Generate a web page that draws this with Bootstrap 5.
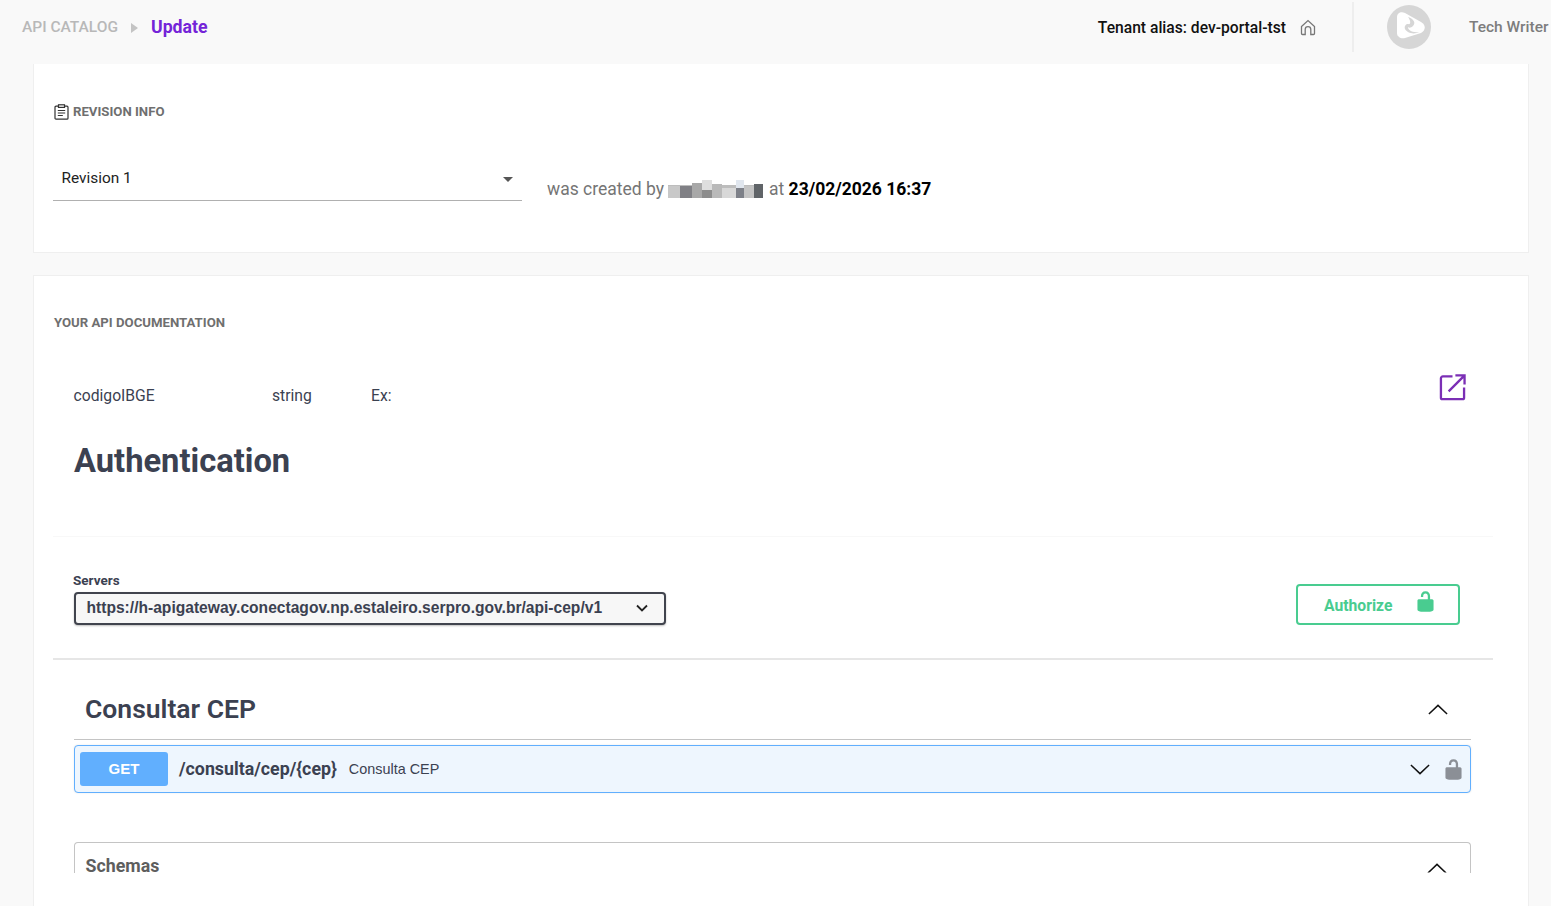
<!DOCTYPE html>
<html lang="en"><head><meta charset="utf-8"><title>Update</title>
<link href="https://cdn.jsdelivr.net/npm/bootstrap@5.3.0/dist/css/bootstrap.min.css" rel="stylesheet">
<style>
html,body{height:906px;overflow:hidden}
body{background:#f9f9f9;font-family:Roboto,sans-serif;color:#000}
.top-bar{height:64px;padding:0 0 10px 22px}
.crumb-root{font-size:15.5px;font-weight:500;color:#b8b8b8;margin-top:2px}
.crumb-sep{width:0;height:0;border-left:7px solid #c4c4c4;border-top:5px solid transparent;border-bottom:5px solid transparent;margin:1px 13px 0 13px}
.crumb-now{font-size:17.7px;font-weight:700;color:#7424d8}
.tenant{font-size:15.65px;font-weight:500;color:#111;margin:2px 14px 0 0}
.vrule{width:2px;height:50px;background:#eeeeee;margin:0 33px 0 36px}
.who{font-size:15.5px;font-weight:500;color:#7d7d7d;margin:2px 0 0 38px;white-space:nowrap;width:82px}
.sheet{margin-left:33px;width:1496px;background:#fff;border:1px solid #efefef}
.sheet-a{height:189px;border-top:0;padding:40px 19px 0 19px}
.sheet-b{margin-top:22px;height:640px;padding:39px 19px 0 19px}
.sec-title{font-size:13.2px;font-weight:700;color:#6f6f6f;line-height:16px;padding-left:1px}
.rev-row{margin-top:38px}
.rev-select{width:469px;height:43px;border-bottom:1px solid #b0b0b0;padding:0 9px 0 8.5px;font-size:15.4px;color:#222}
.caret-down{width:0;height:0;border-top:5px solid #555;border-left:5px solid transparent;border-right:5px solid transparent}
.rev-note{margin-left:25px;margin-top:19px;font-size:17.5px;color:#757575;line-height:24px}
.rev-note b{color:#000;font-weight:700}
.pix{margin:0 6px 0 4px;vertical-align:-3px}
.doc-flow{margin-right:16px}
.param-row{height:108px;padding:53px 26px 0 20.5px;font-size:15.7px;color:#3b4151}
.param-name{width:198.5px}.param-type{width:99px}
.ext-icon{margin-top:-10px;margin-right:1px}
.doc-h1{font-size:32.7px;font-weight:700;color:#3b4151;margin:0 0 0 21px;line-height:40px;height:97px;padding-top:2px}
.pale-rule{border-top:1px solid #f8f8f8;height:38px}
.srv-wrap{padding:0 33px 0 20px;height:84px}
.srv-label{font-size:13.5px;font-weight:700;color:#3b4151;line-height:14px;margin:-1px 0 5px 0}
.srv-select{width:592px;height:33px;margin-left:1px;border:2px solid #41444e;border-radius:4px;background:#f7f7f7;padding:0 16px 1px 10.5px;box-shadow:0 1px 2px rgba(0,0,0,.25);font-family:"Liberation Sans",sans-serif;font-size:15.6px;font-weight:700;color:#3b4151}
.auth-btn{width:164px;height:41px;border:2px solid #49cc90;border-radius:4px;color:#49cc90;background:#fff;font-family:Roboto,sans-serif;font-size:15.7px;font-weight:700;padding:0 21px 0 26px;margin-top:10px}
.auth-btn span{margin-top:2px}
.auth-btn svg{margin-top:-7px}
.srv-rule{border-top:2px solid #e6e6e6}
.tag-head{height:80px;margin:0 22px 0 21px;padding:18px 23px 0 11px;border-bottom:1px solid #c4c4c4;color:#3b4151;font-size:26.5px;font-weight:600}
.tag-chev{margin-top:2px}
.opblk{height:48px;margin:5px 22px 0 21px;border:1px solid #61affe;border-radius:4px;background:#eef6fe;padding:0 5px 0 5px;box-shadow:0 0 2px rgba(0,0,0,.1)}
.get-tag{width:88px;height:34px;background:#61affe;border-radius:3px;color:#fff;font-family:"Liberation Sans",sans-serif;font-size:15px;font-weight:700}
.op-path{font-size:17.8px;font-weight:700;color:#3b4151;margin-left:11px}
.op-sum{font-family:"Liberation Sans",sans-serif;font-size:14.4px;color:#3b4151;margin:2px 0 0 12px}
.lock-gap{margin-left:12px}
.schema-box{margin:49px 22px 0 21px;border:1px solid #c4c4c4;border-bottom:0;border-radius:4px 4px 0 0;height:31px;padding:0 23px 0 10.5px;font-size:17.8px;font-weight:700;color:#5e5e5e}
.schema-head{height:46px;line-height:14px}
.schema-chev{margin-top:4px;clip-path:inset(0 0 1px 0)}
</style></head>
<body>
<header class="top-bar d-flex align-items-center">
  <span class="crumb-root">API CATALOG</span><span class="crumb-sep"></span><span class="crumb-now">Update</span>
  <span class="ms-auto tenant">Tenant alias: dev-portal-tst</span>
  <svg width="16" height="17" viewBox="0 0 16 17" fill="none" stroke="#777" stroke-width="1.3"><path d="M1.5 7.5 8 1.6l6.5 5.9v7a1 1 0 0 1-1 1h-2.7V10.5a2.8 2.8 0 0 0-5.6 0v5H2.5a1 1 0 0 1-1-1z"/></svg>
  <span class="vrule"></span>
  <svg width="44" height="44" viewBox="0 0 44 44"><circle cx="22" cy="22" r="22" fill="#d6d6d6"/><path d="M10 12c0-4 4-6 8-4l16 9c5 3 5 8 0 11l-16 5c-4 1-8-1-8-5z" fill="#fff"/><path d="M21 12c6 2 8 6 5 9-2 2-4 2-5 1 0 3 4 6 11 5-5 3-12 1-14-3-1-3 1-5 3-5 3 1 3-3 0-7z" fill="#d6d6d6"/></svg>
  <span class="who">Tech Writer</span>
</header>
<main>
  <section class="sheet sheet-a">
    <div class="sec-title d-flex align-items-center gap-1">
      <svg width="15" height="16" viewBox="0 0 15 16" fill="none" stroke="#333" stroke-width="1.2"><rect x="1" y="2.2" width="13" height="13" rx="1"/><rect x="4.5" y="0.8" width="6" height="2.6" fill="#fff"/><path d="M3.8 6.5h7.4M3.8 9h7.4M3.8 11.5h5"/></svg>
      <span>REVISION INFO</span>
    </div>
    <div class="rev-row d-flex align-items-start">
      <div class="rev-select d-flex align-items-center justify-content-between"><span>Revision 1</span><span class="caret-down"></span></div>
      <div class="rev-note">was created by<svg class="pix" width="95" height="18" viewBox="0 0 95 18" shape-rendering="crispEdges"><rect y="5" width="95" height="13" fill="#bdbdbd"/><rect x="0" y="6" width="12" height="12" fill="#c8c8c8"/><rect x="12" y="6" width="12" height="12" fill="#808085"/><rect x="24" y="3" width="10" height="15" fill="#a8a8a8"/><rect x="34" y="0" width="10" height="10" fill="#dedede"/><rect x="34" y="10" width="10" height="8" fill="#8d8d8d"/><rect x="44" y="4" width="10" height="14" fill="#b9b9b9"/><rect x="54" y="8" width="14" height="10" fill="#d8d8d8"/><rect x="68" y="0" width="8" height="8" fill="#e0e6ee"/><rect x="68" y="8" width="8" height="10" fill="#7d8088"/><rect x="76" y="6" width="10" height="12" fill="#c4c4c4"/><rect x="86" y="4" width="9" height="14" fill="#606468"/></svg>at <b>23/02/2026 16:37</b></div>
    </div>
  </section>
  <section class="sheet sheet-b">
    <div class="sec-title">YOUR API DOCUMENTATION</div>
    <div class="doc-flow">
      <div class="param-row d-flex align-items-start">
        <span class="param-name">codigoIBGE</span><span class="param-type">string</span><span>Ex:</span>
        <svg class="ext-icon ms-auto" width="27" height="27" viewBox="0 0 28 28" fill="none" stroke="#7b2fb5" stroke-width="2.4"><path d="M14 2.5H4a2 2 0 0 0-2 2v20a1.5 1.5 0 0 0 1.5 1.5h21a1.5 1.5 0 0 0 1.5-1.5V14M10 18 26 2M17 1.5h9.5V11"/></svg>
      </div>
      <h1 class="doc-h1">Authentication</h1>
      <div class="pale-rule"></div>
      <div class="srv-wrap d-flex justify-content-between align-items-start">
        <div>
          <div class="srv-label">Servers</div>
          <div class="srv-select d-flex align-items-center justify-content-between"><span>https://h-apigateway.conectagov.np.estaleiro.serpro.gov.br/api-cep/v1</span>
            <svg width="12" height="8" viewBox="0 0 12 8" fill="none" stroke="#222" stroke-width="1.8"><path d="M1 1.5l5 5 5-5"/></svg></div>
        </div>
        <button type="button" class="auth-btn btn d-flex align-items-center justify-content-between"><span>Authorize</span>
          <svg width="23" height="23" viewBox="0 0 20 20" fill="#49cc90"><path d="M15.8 8H14V5.6C14 2.703 12.665 1 10 1 7.334 1 6 2.703 6 5.6V6h2v-.801C8 3.754 8.797 3 10 3c1.203 0 2 .754 2 2.199V8H4c-.553 0-1 .646-1 1.199V17c0 .549.428 1.139.951 1.307l1.197.387C5.672 18.861 6.55 19 7.1 19h5.8c.549 0 1.428-.139 1.951-.307l1.196-.387c.524-.167.953-.757.953-1.306V9.199C17 8.646 16.352 8 15.8 8z"/></svg></button>
      </div>
      <div class="srv-rule"></div>
      <div class="tag-head d-flex align-items-center justify-content-between"><span>Consultar CEP</span>
        <svg class="tag-chev" width="20" height="11" viewBox="0 0 22 12" preserveAspectRatio="none" fill="none" stroke="#111" stroke-width="1.6"><path d="M1 11 11 1.5 21 11"/></svg></div>
      <div class="opblk d-flex align-items-center">
        <span class="get-tag d-flex align-items-center justify-content-center">GET</span>
        <span class="op-path">/consulta/cep/{cep}</span><span class="op-sum">Consulta CEP</span>
        <svg class="ms-auto" width="20" height="11" viewBox="0 0 22 12" preserveAspectRatio="none" fill="none" stroke="#111" stroke-width="1.6"><path d="M1 1l10 9.5L21 1"/></svg>
        <svg class="lock-gap" width="23" height="23" viewBox="0 0 20 20" fill="#8b8f96"><path d="M15.8 8H14V5.6C14 2.703 12.665 1 10 1 7.334 1 6 2.703 6 5.6V6h2v-.801C8 3.754 8.797 3 10 3c1.203 0 2 .754 2 2.199V8H4c-.553 0-1 .646-1 1.199V17c0 .549.428 1.139.951 1.307l1.197.387C5.672 18.861 6.55 19 7.1 19h5.8c.549 0 1.428-.139 1.951-.307l1.196-.387c.524-.167.953-.757.953-1.306V9.199C17 8.646 16.352 8 15.8 8z"/></svg>
      </div>
      <div class="schema-box"><div class="schema-head d-flex align-items-center justify-content-between"><span>Schemas</span>
        <svg class="schema-chev" width="20" height="11" viewBox="0 0 22 12" preserveAspectRatio="none" fill="none" stroke="#111" stroke-width="1.6"><path d="M1 11 11 1.5 21 11"/></svg></div></div>
    </div>
  </section>
</main>
</body></html>
